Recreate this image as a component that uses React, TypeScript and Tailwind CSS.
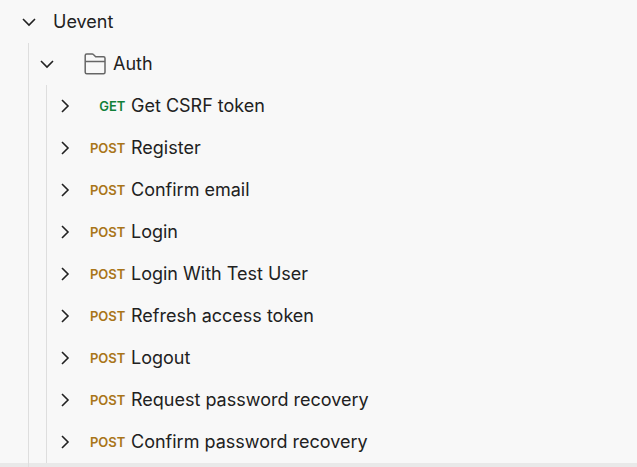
type Request = { method: 'GET' | 'POST'; name: string };

const requests: Request[] = [
  { method: 'GET', name: 'Get CSRF token' },
  { method: 'POST', name: 'Register' },
  { method: 'POST', name: 'Confirm email' },
  { method: 'POST', name: 'Login' },
  { method: 'POST', name: 'Login With Test User' },
  { method: 'POST', name: 'Refresh access token' },
  { method: 'POST', name: 'Logout' },
  { method: 'POST', name: 'Request password recovery' },
  { method: 'POST', name: 'Confirm password recovery' },
];

function Chevron({ open = false }: { open?: boolean }) {
  return (
    <svg className="size-4 shrink-0" viewBox="0 0 16 16" fill="none" stroke="#212121" strokeWidth="1.6">
      <path d={open ? 'M2 5 8 11 14 5' : 'M5 2 11 8 5 14'} />
    </svg>
  );
}

function FolderIcon() {
  return (
    <svg className="h-6 w-6 shrink-0" viewBox="0 0 24 24" fill="none" stroke="#666666" strokeWidth="1.5">
      <path d="M2.2 3.5a1.5 1.5 0 0 1 1.5-1.5h5.5a1.6 1.6 0 0 1 1.2.5L12.7 4.7h7.8A1.5 1.5 0 0 1 22 6.2v14a1.5 1.5 0 0 1-1.5 1.5H3.7a1.5 1.5 0 0 1-1.5-1.5ZM2.2 9.5H22" />
    </svg>
  );
}

function RequestRow({ method, name }: Request) {
  return (
    <li className="flex h-[42px] items-center pl-[10px]">
      <Chevron />
      <span
        className={`w-[52.5px] pt-px text-right text-[13px] font-semibold tracking-[0.05px] ${method === 'GET' ? 'text-[#108038]' : 'text-[#a97519]'}`}
      >
        {method}
      </span>
      <span className="ml-[5.5px] pb-px">{name}</span>
    </li>
  );
}

export default function App() {
  return (
    <main className="flex h-[467px] w-full flex-col overflow-hidden bg-[linear-gradient(#f8f8f8_463px,#e9e9e9_463px)] pt-px font-['Inter',sans-serif] text-[18px] whitespace-nowrap text-[#212121]">
      <div className="flex h-[42px] shrink-0 items-center pl-[21px]">
        <Chevron open />
        <span className="ml-4 pb-px">Uevent</span>
      </div>
      <div className="ml-7 h-[424px] border-l border-[#dedede]">
        <div className="flex h-[42px] items-center pl-[10px]">
          <Chevron open />
          <span className="ml-7">
            <FolderIcon />
          </span>
          <span className="ml-1.5 pb-px">Auth</span>
        </div>
        <ul className="ml-[17px] border-l border-[#dedede]">
          {requests.map((request) => (
            <RequestRow key={request.name} {...request} />
          ))}
        </ul>
      </div>
    </main>
  );
}
